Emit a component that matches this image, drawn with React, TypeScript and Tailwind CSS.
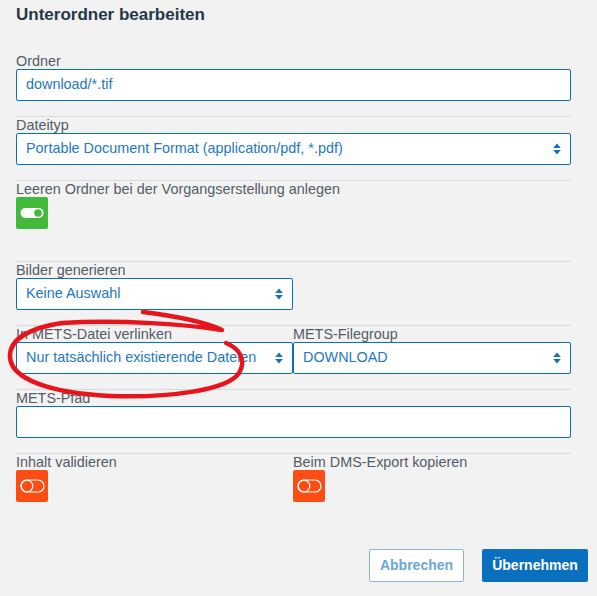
import React from "react";

const Arrows = () => (
  <svg width="8" height="12" viewBox="0 0 8 12" className="shrink-0">
    <path d="M4 0.5 L7.8 5 L0.2 5 Z" fill="#1670b8" />
    <path d="M4 11.5 L7.8 7 L0.2 7 Z" fill="#1670b8" />
  </svg>
);

const Select = ({ value, className = "" }: { value: string; className?: string }) => (
  <div
    className={`h-[32px] bg-white border border-[#0b6fba] rounded-[2px] flex items-center pl-[9px] pr-[9px] text-[14.4px] text-[#1f78c1] ${className}`}
  >
    <span className="flex-1 truncate">{value}</span>
    <Arrows />
  </div>
);

const Input = ({ value }: { value: string }) => (
  <div className="h-[32px] bg-white border border-[#0b6fba] rounded-[2px] flex items-center pl-[9px] text-[14.4px] text-[#1f78c1]">
    {value}
  </div>
);

const Label = ({ children }: { children: React.ReactNode }) => (
  <div className="h-[16px] leading-[16px] text-[14.4px] text-[#525c66] whitespace-nowrap">{children}</div>
);

const ToggleOn = () => (
  <div className="w-[32px] h-[32px] bg-[#43b93b] rounded-[2px] flex items-center justify-center">
    <svg width="24" height="12" viewBox="0 0 24 12">
      <rect x="0.5" y="1" width="23" height="10" rx="5" fill="white" />
      <circle cx="18" cy="6" r="3.8" fill="#43b93b" />
    </svg>
  </div>
);

const ToggleOff = () => (
  <div className="w-[32px] h-[32px] bg-[#fc4e14] rounded-[2px] flex items-center justify-center">
    <svg width="25" height="14" viewBox="0 0 25 14">
      <rect x="1" y="1" width="23" height="12" rx="6" fill="none" stroke="white" strokeWidth="1.2" />
      <circle cx="7" cy="7" r="5.8" fill="none" stroke="white" strokeWidth="1.2" />
    </svg>
  </div>
);

const Row = ({
  children,
  border = true,
  pb = "pb-[15px]",
}: {
  children: React.ReactNode;
  border?: boolean;
  pb?: string;
}) => (
  <div className={`border-t ${border ? "border-[#d9d9d9]" : "border-transparent"} ${pb}`}>{children}</div>
);

export default function App() {
  return (
    <div
      className="relative w-[597px] h-[596px] bg-[#f2f2f2] flex flex-col overflow-hidden"
      style={{ fontFamily: '"Liberation Sans", Arial, sans-serif' }}
    >
      <div className="pl-[16px] pr-[26px] h-[52px] pt-[5px]">
        <h1 className="text-[17px] leading-[20px] font-bold text-[#253746]">Unterordner bearbeiten</h1>
      </div>
      <div className="pl-[16px] pr-[26px]">
        <Row border={false}>
          <Label>Ordner</Label>
          <Input value="download/*.tif" />
        </Row>
        <Row>
          <Label>Dateityp</Label>
          <Select value="Portable Document Format (application/pdf, *.pdf)" />
        </Row>
        <Row pb="pb-[32px]">
          <Label>Leeren Ordner bei der Vorgangserstellung anlegen</Label>
          <ToggleOn />
        </Row>
        <Row>
          <Label>Bilder generieren</Label>
          <Select value="Keine Auswahl" className="w-[277px]" />
        </Row>
        <Row>
          <div className="grid grid-cols-[277px_1fr]">
            <div>
              <Label>In METS-Datei verlinken</Label>
              <Select value="Nur tatsächlich existierende Dateien" />
            </div>
            <div>
              <Label>METS-Filegroup</Label>
              <Select value="DOWNLOAD" />
            </div>
          </div>
        </Row>
        <Row>
          <Label>METS-Pfad</Label>
          <Input value="" />
        </Row>
        <Row>
          <div className="grid grid-cols-[277px_1fr]">
            <div>
              <Label>Inhalt validieren</Label>
              <ToggleOff />
            </div>
            <div>
              <Label>Beim DMS-Export kopieren</Label>
              <ToggleOff />
            </div>
          </div>
        </Row>
      </div>
      <div className="mt-auto flex justify-end gap-[18px] pr-[9px] pb-[14px]">
        <button className="w-[95px] h-[33px] bg-white border border-[#86b6de] rounded-[2px] text-[14px] font-bold text-[#6ba6d7]">
          Abbrechen
        </button>
        <button className="w-[106px] h-[33px] bg-[#0a70bd] rounded-[2px] text-[14px] font-bold text-white">
          Übernehmen
        </button>
      </div>
      <svg
        className="absolute left-0 top-0 pointer-events-none"
        width="597"
        height="596"
        viewBox="0 0 597 596"
      >
        <path
          d="M143,312 C175,316 205,322 222,330 C190,325 120,319 62,323 C28,328 9,340 10,357 C11,379 50,393 110,396 C170,398 228,390 239,373 C247,360 239,348 226,343"
          fill="none"
          stroke="#e8141c"
          strokeWidth="4.5"
          strokeLinecap="round"
          strokeLinejoin="round"
        />
      </svg>
    </div>
  );
}
